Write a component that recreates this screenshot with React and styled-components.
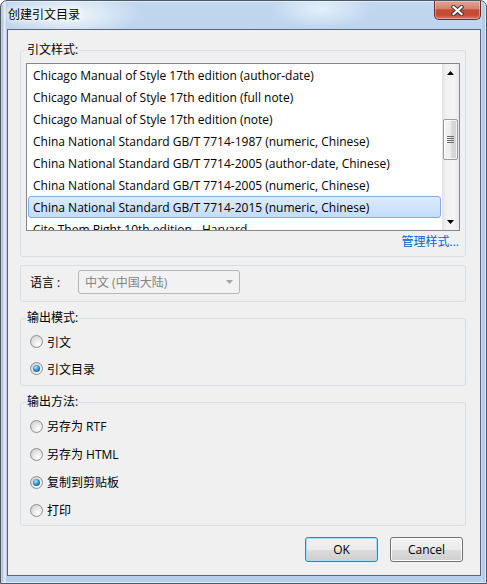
import React from 'react';
import styled, { createGlobalStyle } from 'styled-components';

const font = `"Open Sans", "Noto Sans CJK SC", sans-serif`;

const GlobalStyle = createGlobalStyle`
  html, body {
    margin: 0;
    padding: 0;
    background: #fff;
  }
  body {
    font-family: ${font};
    font-size: 12px;
    color: #000;
  }
`;

const styles = [
  'Chicago Manual of Style 17th edition (author-date)',
  'Chicago Manual of Style 17th edition (full note)',
  'Chicago Manual of Style 17th edition (note)',
  'China National Standard GB/T 7714-1987 (numeric, Chinese)',
  'China National Standard GB/T 7714-2005 (author-date, Chinese)',
  'China National Standard GB/T 7714-2005 (numeric, Chinese)',
  'China National Standard GB/T 7714-2015 (numeric, Chinese)',
  'Cite Them Right 10th edition - Harvard',
];

const Window = styled.div`
  box-sizing: border-box;
  width: 487px;
  height: 584px;
  display: flex;
  flex-direction: column;
  padding: 0 5px 7px 6px;
  border: 1px solid #4b5967;
  border-radius: 7px 7px 0 0;
  background:
    linear-gradient(to right, #7d8fa3 0, #c9d7e5 2px, #e8eff7 4px, #a8c3e0 6px) left top / 6px 100% no-repeat,
    linear-gradient(to right, #c4dbf3 0, #a9c8ea 3px, #c9dcf1 5px) right top / 5px 100% no-repeat,
    radial-gradient(ellipse 70px 24px at 70px 14px, rgba(255, 255, 255, 0.8), rgba(255, 255, 255, 0)),
    radial-gradient(ellipse 50px 20px at 320px 8px, rgba(240, 248, 255, 0.75), rgba(255, 255, 255, 0)),
    linear-gradient(to bottom, #c2d8f0, #bcd3ec 40px, #b6cfea);
  box-shadow: inset 0 0 0 1px rgba(255, 255, 255, 0.5);
`;

const TitleBar = styled.div`
  flex: none;
  height: 28px;
  display: flex;
  align-items: flex-start;
`;

const Title = styled.div`
  flex: 1;
  margin: 6px 0 0 1px;
  line-height: 16px;
  font-size: 12px;
  text-shadow: 0 0 4px #fff, 0 0 8px #fff, 0 0 12px rgba(255, 255, 255, 0.8);
`;

const CloseButton = styled.div`
  box-sizing: border-box;
  width: 47px;
  height: 19px;
  display: flex;
  align-items: center;
  justify-content: center;
  border: 1px solid #6a2d24;
  border-top: none;
  border-radius: 0 0 5px 5px;
  background: linear-gradient(#e3a596, #d78171 42%, #c24a33 50%, #c54c33 78%, #d77a5f);
  box-shadow: inset 0 0 0 1px rgba(255, 220, 210, 0.45);
`;

const Client = styled.div`
  flex: 1;
  display: flex;
  flex-direction: column;
  border: 1px solid #56687c;
  background: #f0f0f0;
  padding: 13px 14px 0 12px;
`;

const Group = styled.fieldset`
  margin: ${p => p.$mt}px 0 0;
  padding: 0;
  min-width: 0;
  border: 1px solid #d5dfe5;
  border-radius: 3px;
`;

const Legend = styled.legend`
  margin-left: 5px;
  padding: 0 1px;
  line-height: 14px;
  font-size: 12px;
`;

const ListBox = styled.div`
  box-sizing: border-box;
  height: 168px;
  margin: 6px 5px 0;
  display: flex;
  border: 1px solid #828790;
  background: #fff;
  overflow: hidden;
`;

const Items = styled.div`
  flex: 1;
  min-width: 0;
  padding: 0 1px;
`;

const Item = styled.div`
  box-sizing: border-box;
  height: 22px;
  display: flex;
  align-items: center;
  padding-left: 4px;
  white-space: nowrap;
  border: 1px solid ${p => (p.$selected ? '#84acdd' : 'transparent')};
  border-radius: 3px;
  background: ${p => (p.$selected ? 'linear-gradient(#dcebfc, #c4dcfb)' : 'transparent')};
`;

const ScrollTrack = styled.div`
  flex: none;
  width: 17px;
  display: flex;
  flex-direction: column;
  align-items: center;
  background: linear-gradient(to right, #e2e2e2, #f1f1f1 25%, #f4f4f4 70%, #e9e9e9);
`;

const ArrowBox = styled.div`
  flex: none;
  width: 17px;
  height: 17px;
  display: flex;
  align-items: center;
  justify-content: center;
`;

const Thumb = styled.div`
  box-sizing: border-box;
  width: 15px;
  height: 41px;
  margin-top: 38px;
  display: flex;
  align-items: center;
  justify-content: center;
  border: 1px solid #9a9a9a;
  border-radius: 2px;
  background: linear-gradient(to right, #f4f4f4, #ececec 50%, #dcdcdc 51%, #d2d2d2);
  box-shadow: inset 0 0 0 1px rgba(255, 255, 255, 0.7);
`;

const Spacer = styled.div`
  flex: 1;
`;

const LinkRow = styled.div`
  display: flex;
  justify-content: flex-end;
  margin: 3px 6px 6px;
  line-height: 16px;
`;

const Link = styled.a`
  color: #0066cc;
  font-size: 12px;
  text-decoration: none;
  cursor: pointer;
`;

const LangRow = styled.div`
  display: flex;
  align-items: center;
  padding: 4px 0 7px 9px;
`;

const LangLabel = styled.span`
  width: 48px;
`;

const Combo = styled.div`
  box-sizing: border-box;
  width: 162px;
  height: 24px;
  display: flex;
  align-items: center;
  padding: 0 6px 0 6px;
  border: 1px solid #b5b5b5;
  border-radius: 3px;
  background: #f2f2f2;
  color: #838383;
`;

const ComboText = styled.span`
  flex: 1;
`;

const RadioList = styled.div`
  display: flex;
  flex-direction: column;
  padding: 3px 0 ${p => p.$pb}px 9px;
`;

const RadioRow = styled.label`
  height: ${p => p.$h}px;
  display: flex;
  align-items: center;
  gap: 4px;
`;

const RadioDot = styled.span`
  box-sizing: border-box;
  width: 13px;
  height: 13px;
  flex: none;
  display: flex;
  align-items: center;
  justify-content: center;
  border: 1px solid #8e8f8f;
  border-radius: 50%;
  background: radial-gradient(circle at 65% 70%, #ffffff, #e6e6e6 45%, #c9c9c9);
  &::after {
    content: '';
    display: ${p => (p.$on ? 'block' : 'none')};
    width: 7px;
    height: 7px;
    border-radius: 50%;
    background: radial-gradient(circle at 40% 35%, #b8ecff 0, #3b9ad8 40%, #125a96 80%);
  }
`;

const ButtonRow = styled.div`
  display: flex;
  justify-content: flex-end;
  gap: 12px;
  margin: 11px 3px 0 0;
`;

const Button = styled.button`
  box-sizing: border-box;
  width: 73px;
  height: 25px;
  padding: 0;
  font-family: ${font};
  font-size: 12px;
  color: #000;
  border: 1px solid ${p => (p.$default ? '#3c7fb1' : '#707070')};
  border-radius: 3px;
  background: linear-gradient(#f2f2f2, #ebebeb 50%, #dddddd 51%, #cfcfcf);
  box-shadow: inset 0 0 0 1px ${p => (p.$default ? '#9fe3fb' : '#fcfcfc')};
`;

const Triangle = ({ up, color = '#000' }) => (
  <svg width="7" height="4" viewBox="0 0 7 4">
    <path d={up ? 'M0 4 L3.5 0 L7 4 Z' : 'M0 0 L7 0 L3.5 4 Z'} fill={color} />
  </svg>
);

const Grip = () => (
  <svg width="7" height="8" viewBox="0 0 7 8">
    {[0, 2, 4, 6].map(y => (
      <rect key={y} x="0" y={y} width="7" height="1" fill="#6b6b6b" />
    ))}
  </svg>
);

const CloseGlyph = () => (
  <svg width="13" height="11" viewBox="0 0 13 11">
    <path d="M2.5 2 L10.5 9 M10.5 2 L2.5 9" stroke="#3a3a3a" strokeWidth="4.2" strokeLinecap="square" />
    <path d="M2.5 2 L10.5 9 M10.5 2 L2.5 9" stroke="#fff" strokeWidth="2.2" strokeLinecap="square" />
  </svg>
);

const Radio = ({ label, on, h }) => (
  <RadioRow $h={h}>
    <RadioDot $on={on} />
    <span>{label}</span>
  </RadioRow>
);

export default function App() {
  return (
    <>
      <GlobalStyle />
      <Window>
        <TitleBar>
          <Title>创建引文目录</Title>
          <CloseButton>
            <CloseGlyph />
          </CloseButton>
        </TitleBar>
        <Client>
          <Group $mt={0}>
            <Legend>引文样式:</Legend>
            <ListBox>
              <Items>
                {styles.map((s, i) => (
                  <Item key={s} $selected={i === 6}>{s}</Item>
                ))}
              </Items>
              <ScrollTrack>
                <ArrowBox><Triangle up /></ArrowBox>
                <Thumb><Grip /></Thumb>
                <Spacer />
                <ArrowBox><Triangle /></ArrowBox>
              </ScrollTrack>
            </ListBox>
            <LinkRow>
              <Link>管理样式...</Link>
            </LinkRow>
          </Group>

          <Group $mt={8}>
            <LangRow>
              <LangLabel>语言 :</LangLabel>
              <Combo>
                <ComboText>中文 (中国大陆)</ComboText>
                <Triangle color="#a3a3a3" />
              </Combo>
            </LangRow>
          </Group>

          <Group $mt={9}>
            <Legend>输出模式:</Legend>
            <RadioList $pb={3}>
              <Radio label="引文" h={27} />
              <Radio label="引文目录" h={27} on />
            </RadioList>
          </Group>

          <Group $mt={9}>
            <Legend>输出方法:</Legend>
            <RadioList $pb={1}>
              <Radio label="另存为 RTF" h={28} />
              <Radio label="另存为 HTML" h={28} />
              <Radio label="复制到剪贴板" h={28} on />
              <Radio label="打印" h={28} />
            </RadioList>
          </Group>

          <ButtonRow>
            <Button $default>OK</Button>
            <Button>Cancel</Button>
          </ButtonRow>
        </Client>
      </Window>
    </>
  );
}
